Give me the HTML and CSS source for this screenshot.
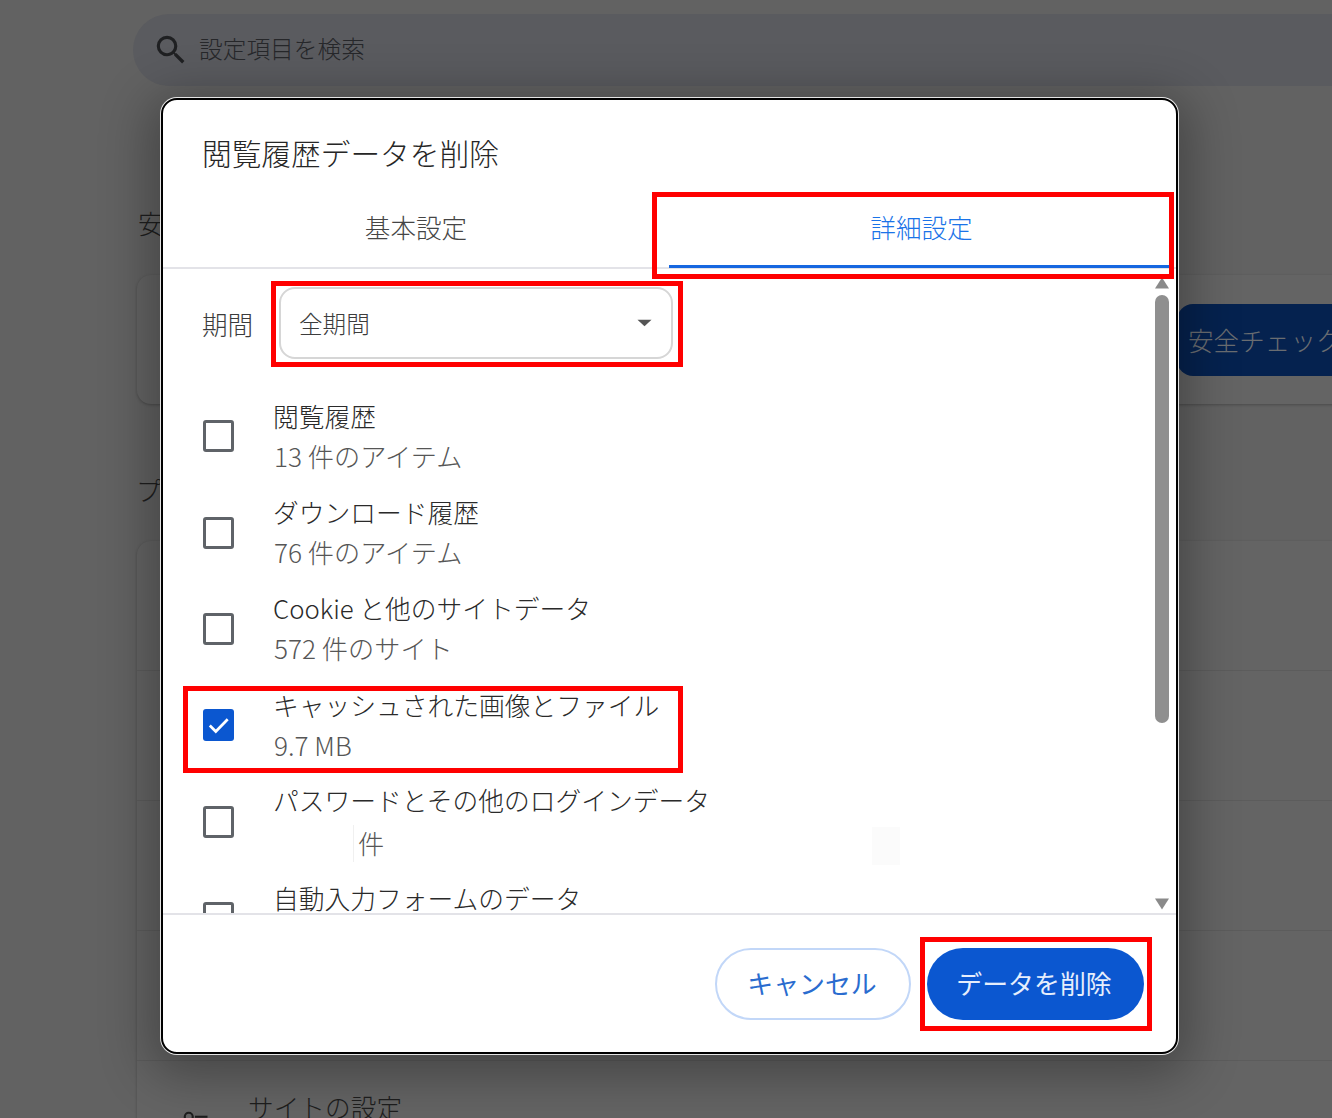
FILE: index.html
```html
<!DOCTYPE html>
<html lang="ja">
<head>
<meta charset="utf-8">
<title>閲覧履歴データを削除</title>
<link rel="stylesheet" href="styles.css">
</head>
<body>
<div class="page">
  <div class="settings">
    <div class="search">
      <svg class="search-icon" viewBox="0 0 24 24"><path d="M15.5 14h-.79l-.28-.27A6.47 6.47 0 0 0 16 9.5 6.5 6.5 0 1 0 9.5 16c1.61 0 3.09-.59 4.23-1.57l.27.28v.79l5 4.99L20.49 19l-4.99-5zm-6 0C7.01 14 5 11.99 5 9.5S7.01 5 9.5 5 14 7.01 14 9.5 11.99 14 9.5 14z"/></svg>
      <span>設定項目を検索</span>
    </div>
    <h2 class="section-label first">安全チェック</h2>
    <div class="card safety">
      <div class="safety-btn">安全チェックを実行</div>
    </div>
    <h2 class="section-label second">プライバシーとセキュリティ</h2>
    <div class="card privacy">
      <div class="row"></div>
      <div class="row"></div>
      <div class="row"></div>
      <div class="row"></div>
      <div class="row site">
        <svg class="tune" viewBox="0 0 24 24"><circle cx="7" cy="7" r="3.2"/><path d="M12 7h10"/><path d="M2 17h10"/><circle cx="17" cy="17" r="3.2"/></svg>
        <span>サイトの設定</span>
      </div>
    </div>
  </div>

  <div class="dialog">
    <h1 class="title">閲覧履歴データを削除</h1>
    <div class="tabs">
      <div class="tab">基本設定</div>
      <div class="tab active">詳細設定</div>
    </div>
    <div class="body">
      <div class="content">
        <div class="period">
          <span class="period-label">期間</span>
          <div class="select">
            <span>全期間</span>
            <svg class="caret" viewBox="0 0 16 8"><path d="M0.5 0.5h15L8 7.5z"/></svg>
          </div>
        </div>
        <div class="item">
          <span class="check"></span>
          <div class="item-text"><div class="item-title">閲覧履歴</div><div class="item-sub">13 件のアイテム</div></div>
        </div>
        <div class="item">
          <span class="check"></span>
          <div class="item-text"><div class="item-title">ダウンロード履歴</div><div class="item-sub">76 件のアイテム</div></div>
        </div>
        <div class="item">
          <span class="check"></span>
          <div class="item-text"><div class="item-title">Cookie と他のサイトデータ</div><div class="item-sub">572 件のサイト</div></div>
        </div>
        <div class="item">
          <span class="check on">
            <svg viewBox="0 0 32 32"><path d="M7 16.5l6.2 6.2L25.5 10" fill="none" stroke="#fff" stroke-width="2.8"/></svg>
          </span>
          <div class="item-text"><div class="item-title">キャッシュされた画像とファイル</div><div class="item-sub">9.7 MB</div></div>
        </div>
        <div class="item">
          <span class="check"></span>
          <div class="item-text"><div class="item-title">パスワードとその他のログインデータ</div><div class="item-sub masked">件</div></div>
          <span class="mask-patch"></span>
        </div>
        <div class="item">
          <span class="check"></span>
          <div class="item-text"><div class="item-title">自動入力フォームのデータ</div><div class="item-sub">&nbsp;</div></div>
        </div>
      </div>
      <div class="scrollbar">
        <svg class="arrow" viewBox="0 0 14 12"><path d="M7 0.5L14 11.5H0z"/></svg>
        <div class="thumb"></div>
        <svg class="arrow down" viewBox="0 0 14 12"><path d="M0 0.5h14L7 11.5z"/></svg>
      </div>
    </div>
    <div class="footer">
      <div class="btn cancel">キャンセル</div>
      <div class="btn confirm">データを削除</div>
    </div>
  </div>

  <div class="mark mark-tab"></div>
  <div class="mark mark-select"></div>
  <div class="mark mark-item"></div>
  <div class="mark mark-btn"></div>
</div>
</body>
</html>
```

FILE: styles.css
```css
* { box-sizing: border-box; }
html, body { margin: 0; padding: 0; }
body {
  font-family: "Noto Sans CJK JP", "Noto Sans", sans-serif;
  font-weight: 300;
  color: #3a3a3a;
}
.page {
  position: relative;
  width: 1332px;
  height: 1118px;
  overflow: hidden;
  background: #626262;
}

/* dimmed settings page */
.settings { display: flex; flex-direction: column; padding: 14px 0 0 133px; width: 1500px; }
.search {
  display: flex; align-items: center; gap: 10px;
  height: 72px; padding-left: 19px;
  background: #5a5b5f; border-radius: 36px;
  font-size: 23.7px; color: #26272a;
}
.search span { margin-top: -4px; }
.search-icon { width: 38px; height: 38px; fill: #1f2022; margin-right: -1px; }
.section-label {
  margin: 0 0 0 5px; font-size: 25.6px; font-weight: 300; color: #1e1e1e;
  line-height: 36px; white-space: nowrap;
}
.section-label.first { margin-top: 119px; margin-bottom: 34px; }
.section-label.second { margin: 68px 0 33px 3px; }
.card {
  margin-left: 4px; background: #646464; border-radius: 14px;
  box-shadow: 0 1px 3px rgba(0,0,0,.25);
}
.safety { height: 129px; width: 1320px; display: flex; justify-content: flex-end; align-items: center; padding-right: 20px; }
.safety-btn {
  width: 260px; height: 72px; background: #05224f; border-radius: 16px 0 0 16px;
  padding-left: 11px; font-size: 25.6px; line-height: 72px; color: #6a6d71; white-space: nowrap; overflow: hidden;
}
.privacy { width: 1320px; }
.row { height: 130px; border-bottom: 1px solid #5c5c5c; }
.row.site { display: flex; align-items: center; gap: 38px; padding-left: 43px; height: 90px; border: 0; }
.row.site span { font-size: 25.7px; color: #1e1e1e; white-space: nowrap; }
.tune { width: 30px; height: 30px; fill: none; stroke: #1e1e1e; stroke-width: 1.7; margin-top: 34px; flex: none; }

/* dialog */
.dialog {
  position: absolute; left: 161px; top: 98px; width: 1017px; height: 956px;
  display: flex; flex-direction: column;
  background: #fff; border: 2px solid #000; border-radius: 16px;
  box-shadow: 0 0 0 1px #e4e4e4, 0 10px 50px 12px rgba(0,0,0,.3);
}
.title {
  margin: 0; height: 91px; padding: 30px 0 0 39px;
  font-size: 29.7px; font-weight: 300; line-height: 46px; color: #262626;
}
.tabs { display: grid; grid-template-columns: 506px 501px; height: 78px; border-bottom: 2px solid #e3e3e8; }
.tab { text-align: center; font-size: 25.6px; line-height: 72px; color: #454545; }
.tab.active { color: #1a73e8; border-bottom: 3px solid #1667e0; height: 77px; padding-left: 4px; }
.body { flex: 1; min-height: 0; display: flex; padding-right: 4px; border-bottom: 2px solid #e3e3e8; overflow: hidden; }
.content { flex: 1; min-width: 0; padding: 18px 0 0 40px; overflow: hidden; }
.period { display: flex; align-items: center; height: 72px; margin-bottom: 30px; }
.period-label { width: 76px; margin-left: -1px; margin-right: 1px; font-size: 25.6px; color: #3c3c3c; }
.select {
  display: flex; align-items: center; justify-content: space-between;
  width: 394px; height: 72px; padding: 0 19px 0 18px;
  border: 2px solid #d6d6d6; border-radius: 16px;
  font-size: 23.6px; color: #3c3c3c;
}
.caret { width: 15px; height: 8px; fill: #555; }
.item { position: relative; display: flex; align-items: center; gap: 39px; height: 96.4px; }
.check { width: 31px; height: 32px; flex: none; border: 3px solid #5f6368; border-radius: 3px; margin-top: -2px; }
.check.on { background: #0b57d0; border: 0; }
.check.on svg { display: block; width: 31px; height: 32px; }
.item-text { margin-top: -3px; }
.item-title { font-size: 25.75px; line-height: 41px; color: #2a2a2a; white-space: nowrap; }
.item-sub { font-size: 26.2px; line-height: 41px; color: #565656; white-space: nowrap; padding-left: 1px; }
.item-sub.masked { padding-left: 85px; position: relative; margin-top: 3px; }
.item-sub.masked::before { content: ""; position: absolute; left: 80px; top: 2px; bottom: 2px; width: 1px; background: #f0f0f0; }
.mask-patch { position: absolute; left: 669px; top: 52px; width: 28px; height: 38px; background: #fbfbfb; }
.scrollbar { position: relative; width: 20px; flex: none; display: flex; flex-direction: column; align-items: center; padding-top: 8px; }
.arrow { width: 14px; height: 12px; fill: #8a8a8a; flex: none; }
.thumb { width: 14px; height: 428px; margin-top: 6px; background: #8f8f8f; border-radius: 7px; flex: none; }
.arrow.down { margin-top: auto; margin-bottom: 3px; }
.footer { height: 137px; display: flex; justify-content: flex-end; gap: 16px; padding: 33px 32px 0 0; }
.btn { height: 72px; border-radius: 36px; text-align: center; font-size: 25.9px; line-height: 69px; font-weight: 400; }
.cancel { width: 196px; border: 2px solid #c2d7f8; color: #2a6ccf; line-height: 66px; padding-right: 2px; }
.confirm { width: 217px; background: #0b57d0; color: #e6eefc; padding-right: 3px; }

/* red annotation frames drawn over the screenshot */
.mark { position: absolute; border: 5px solid #f00; }
.mark-tab { left: 652px; top: 192px; width: 522px; height: 87px; }
.mark-select { left: 271px; top: 281px; width: 412px; height: 86px; }
.mark-item { left: 183px; top: 686px; width: 500px; height: 87px; }
.mark-btn { left: 920px; top: 937px; width: 232px; height: 94px; }
```
